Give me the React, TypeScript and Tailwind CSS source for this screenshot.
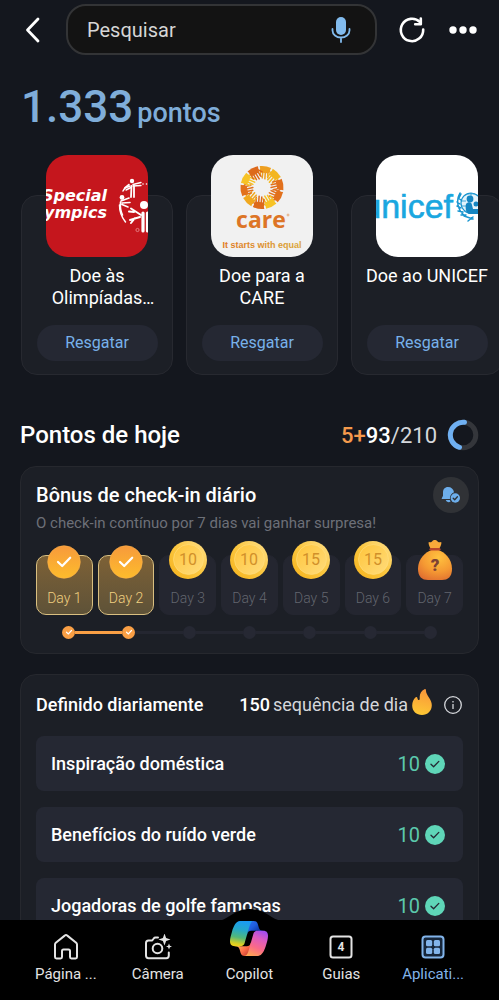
import React, { useState } from "react";
import clsx from "clsx";

interface Donation {
  id: number;
  title: string;
  logo: React.ReactNode;
}

interface CheckInDay {
  day: number;
  points: number;
  status: "done" | "pending" | "surprise";
}

const SpecialOlympicsLogo = () => (
  <svg viewBox="0 0 102 102" className="h-full w-full bg-[#c5161d]" aria-hidden="true">
    <g
      fill="#fff"
      fontFamily="DejaVu Sans, sans-serif"
      fontWeight="700"
      fontStyle="italic"
      fontSize="16"
      textAnchor="end"
    >
      <text x="61" y="46">Special</text>
      <text x="61" y="63">Olympics</text>
    </g>
    <g fill="none" stroke="#fff" strokeLinecap="round">
      <path d="M73.500 50c0 6 2 12 6 17M83 29.500c-2.500 1.500-4.500 3.500-6 6.500" strokeWidth="1.500" />
      <path d="M79 33l5-2M80 35l5-2.500M87 29.500l8-2M87 31l8-.5" strokeWidth="1.400" />
      <path d="M85.500 31l-.5 11M88 31v11" strokeWidth="1.800" />
      <path d="M75 46l8-3M76 48l8-.5M76 49.500l6 2.500M74.500 47c-.5 5 0 9 2 13" strokeWidth="1.600" />
      <path d="M95 60l-10-6.500M94 62l-10 3M88 57l-5-.5M89 63l-4 5" strokeWidth="2" />
      <path d="M97 58v18M101.500 58v18" strokeWidth="3.200" />
    </g>
    <g fill="#fff">
      <circle cx="86" cy="26" r="2.200" />
      <circle cx="76" cy="42.500" r="2.400" />
      <circle cx="98" cy="50" r="4" />
      <circle cx="97" cy="29" r="0.800" />
      <circle cx="100.500" cy="29" r="0.800" />
    </g>
    <circle cx="91.500" cy="75" r="1.600" fill="none" stroke="#f3b7b9" strokeWidth="0.600" />
  </svg>
);

const careHands = [
  "#ee9f20",
  "#f3b61f",
  "#e2711d",
  "#e2711d",
  "#f7c325",
  "#dd6a1c",
  "#f0a81e",
  "#e2711d",
  "#f7c325",
  "#dd6a1c",
];

const CareLogo = () => (
  <svg viewBox="0 0 102 102" className="h-full w-full bg-[#f1f1f1]" aria-hidden="true">
    <defs>
      <linearGradient id="careTag" x1="0" x2="1">
        <stop offset="0" stopColor="#e07a22" />
        <stop offset="1" stopColor="#d9a63a" />
      </linearGradient>
    </defs>
    {careHands.map((color, i) => (
      <g key={i} transform={`translate(51 32.500) rotate(${i * 36 + 10})`}>
        <path d="M-6-20.700A21.600 21.600 0 0 1 5.600-20.800L4-15-3.500-14.500Z" fill={color} />
        <path
          d="M-4.500-18l.5 6.500M-2-17l.5 7.500M.500-17l.8 8M3-17l1 6.500M4-18l3 4"
          stroke={color}
          strokeWidth="1.500"
          strokeLinecap="round"
          fill="none"
        />
      </g>
    ))}
    <text
      x="50"
      y="73"
      fill="#dd7526"
      fontFamily="Open Sans, sans-serif"
      fontWeight="700"
      fontSize="23"
      textAnchor="middle"
    >
      care
    </text>
    <circle cx="77" cy="60" r="1" fill="none" stroke="#dd7526" strokeWidth="0.500" />
    <text
      x="51"
      y="93"
      fill="url(#careTag)"
      fontFamily="Liberation Sans, sans-serif"
      fontWeight="700"
      fontSize="9"
      textAnchor="middle"
    >
      It starts with equal
    </text>
  </svg>
);

const UnicefLogo = () => (
  <svg viewBox="0 0 102 102" className="h-full w-full bg-white" aria-hidden="true">
    <text
      x="77"
      y="63"
      fill="#1aa7e0"
      stroke="#1aa7e0"
      strokeWidth="0.600"
      fontFamily="Liberation Sans, sans-serif"
      fontSize="34"
      textAnchor="end"
    >
      unicef
    </text>
    <circle cx="95" cy="48" r="10" fill="#e3f3fb" stroke="#1a96d0" strokeWidth="1.200" />
    <path d="M88 41c4-3 10-3 14 0M86 46h4M86 51h4M95 38v4M88 56c4 3 10 3 14 0" fill="none" stroke="#1a96d0" strokeWidth="0.800" />
    <path
      d="M84 38c-4 7-3 17 5 23M85 39l-2 4M82 43l3 2M81 47l3 2M81 51l4 2M82 56l5 1M85 60l5 0M88 61l9 3M97 62l-5 4"
      fill="none"
      stroke="#1a96d0"
      strokeWidth="1.500"
      strokeLinecap="round"
    />
    <g fill="#1586c2">
      <circle cx="94" cy="44" r="3.400" />
      <circle cx="100" cy="49" r="2.500" />
      <path d="M90 49c2-3 6-2 6 1l1 4h5v5h-9c-3-1-4-6-3-10z" />
    </g>
  </svg>
);

const CopilotIcon = () => (
  <svg viewBox="0 0 24 22" className="h-[35px] w-[38px]" aria-hidden="true">
    <defs>
      <linearGradient id="cpTop" x1="19" y1="8" x2="12" y2="0" gradientUnits="userSpaceOnUse">
        <stop offset="0.100" stopColor="#0a2f9a" />
        <stop offset="0.600" stopColor="#1f5fe0" />
        <stop offset="1" stopColor="#2a6ff0" />
      </linearGradient>
      <linearGradient id="cpBottom" x1="5" y1="15" x2="12" y2="22" gradientUnits="userSpaceOnUse">
        <stop offset="0" stopColor="#ffb657" />
        <stop offset="0.500" stopColor="#ff6f4a" />
        <stop offset="1" stopColor="#c0362c" />
      </linearGradient>
      <linearGradient id="cpLeft" x1="8" y1="0" x2="5" y2="16" gradientUnits="userSpaceOnUse">
        <stop offset="0" stopColor="#1a9bf5" />
        <stop offset="0.350" stopColor="#25a9c8" />
        <stop offset="0.650" stopColor="#52b87a" />
        <stop offset="0.900" stopColor="#d8cf25" />
        <stop offset="1" stopColor="#f0d21c" />
      </linearGradient>
      <linearGradient id="cpRight" x1="20" y1="6" x2="13" y2="22" gradientUnits="userSpaceOnUse">
        <stop offset="0" stopColor="#a24df0" />
        <stop offset="0.300" stopColor="#dc5bc0" />
        <stop offset="0.650" stopColor="#fa6a88" />
        <stop offset="1" stopColor="#ffa552" />
      </linearGradient>
    </defs>
    <path
      fill="url(#cpTop)"
      d="M17.533 1.829A2.528 2.528 0 0015.11 0h-.737a2.531 2.531 0 00-2.484 2.087l-1.263 6.937.314-1.080a2.528 2.528 0 012.424-1.833h4.284l1.797.706 1.731-.706h-.505a2.528 2.528 0 01-2.423-1.829l-.715-2.453z"
    />
    <path
      fill="url(#cpBottom)"
      d="M6.726 20.160A2.528 2.528 0 009.152 22h1.566c1.370 0 2.490-1.100 2.525-2.480l.170-6.690-.357 1.228a2.528 2.528 0 01-2.423 1.830h-4.320l-1.540-.842-1.667.843h.497c1.124 0 2.113.750 2.426 1.840l.697 2.432z"
    />
    <path
      fill="url(#cpLeft)"
      d="M15 0H6.252c-2.500 0-4 3.331-5 6.662-1.184 3.947-2.734 9.225 1.750 9.225H6.780c1.130 0 2.120-.753 2.430-1.847.657-2.317 1.809-6.359 2.713-9.436.460-1.563.842-2.906 1.430-3.742A1.970 1.970 0 0115 0"
    />
    <path
      fill="url(#cpRight)"
      d="M9 22h8.749c2.500 0 4-3.332 5-6.663 1.184-3.948 2.734-9.227-1.750-9.227H17.220c-1.129 0-2.120.754-2.430 1.848a1149.200 1149.200 0 01-2.713 9.437c-.460 1.564-.842 2.907-1.430 3.743A1.970 1.970 0 019 22"
    />
  </svg>
);

const HomeIcon = () => (
  <svg viewBox="0 0 26 26" className="h-[26px] w-[26px]" fill="none" stroke="currentColor" strokeWidth="2" strokeLinejoin="round" aria-hidden="true">
    <path d="M2 10.600c0-.700.300-1.300.800-1.800L11.700 1.600c.700-.600 1.900-.600 2.600 0l8.900 7.200c.500.500.800 1.100.800 1.800V23c0 .800-.600 1.400-1.400 1.400h-4.200c-.800 0-1.400-.600-1.400-1.400v-6c0-.800-.700-1.500-1.500-1.500h-5c-.800 0-1.500.700-1.500 1.500v6c0 .800-.600 1.400-1.400 1.400H3.400C2.600 24.400 2 23.800 2 23z" />
  </svg>
);

const CameraIcon = () => (
  <svg viewBox="0 0 28 26" className="h-[26px] w-7" fill="none" stroke="currentColor" strokeWidth="2" strokeLinecap="round" strokeLinejoin="round" aria-hidden="true">
    <path d="M14 3.500h-2.500c-.700 0-1.400.400-1.800 1L8.200 6.500H4.500C3.100 6.500 2 7.600 2 9v12.500C2 23 3.100 24.200 4.500 24.200h17.800c1.400 0 2.500-1.200 2.500-2.700V18.500" />
    <circle cx="13.500" cy="14.500" r="4.800" />
    <path d="M20.500-.5l1.600 4.400 4.400 1.600-4.400 1.600-1.600 4.400-1.600-4.400-4.400-1.600 4.400-1.600zM25 9.500l.9 2.300 2.100.7-2.100.7-.9 2.300-.9-2.300-2.100-.7 2.100-.7z" fill="currentColor" stroke="none" />
  </svg>
);

const TabsIcon = () => (
  <svg viewBox="0 0 26 26" className="h-[26px] w-[26px]" aria-hidden="true">
    <rect x="2.500" y="2.500" width="21" height="21" rx="2.500" fill="none" stroke="currentColor" strokeWidth="2" />
    <text x="13" y="17" fill="currentColor" fontFamily="Roboto, sans-serif" fontWeight="700" fontSize="12" textAnchor="middle">
      4
    </text>
  </svg>
);

const AppsIcon = () => (
  <svg viewBox="0 0 26 26" className="h-[26px] w-[26px]" fill="currentColor" aria-hidden="true">
    <rect x="2.500" y="2.500" width="21" height="21" rx="3" fill="#16263a" stroke="currentColor" strokeWidth="2" />
    <rect x="6" y="6" width="6.200" height="6.200" rx="1.500" />
    <rect x="13.800" y="6" width="6.200" height="6.200" rx="1.500" />
    <rect x="6" y="13.800" width="6.200" height="6.200" rx="1.500" />
    <rect x="13.800" y="13.800" width="6.200" height="6.200" rx="1.500" />
  </svg>
);

const Coin = ({ points }: { points: number }) => (
  <svg viewBox="0 0 38 38" className="h-[38px] w-[38px]" aria-label={`${points} pontos`}>
    <defs>
      <linearGradient id="coinRim" x1="0" y1="1" x2="1" y2="0">
        <stop offset="0" stopColor="#f5b21c" />
        <stop offset="0.500" stopColor="#fbc63e" />
        <stop offset="1" stopColor="#ffe08a" />
      </linearGradient>
      <linearGradient id="coinFace" x1="0" y1="0" x2="1" y2="1">
        <stop offset="0" stopColor="#ffc53a" />
        <stop offset="1" stopColor="#ffdc7c" />
      </linearGradient>
    </defs>
    <circle cx="19" cy="19" r="19" fill="url(#coinRim)" />
    <circle cx="19.500" cy="18.500" r="15" fill="url(#coinFace)" stroke="#ffdf82" strokeWidth="0.600" />
    <text x="19" y="24" fill="#d1902a" fontFamily="Roboto, sans-serif" fontSize="16" fontWeight="400" textAnchor="middle">
      {points}
    </text>
  </svg>
);

const CheckBadge = () => (
  <svg viewBox="0 0 34 34" className="h-[34px] w-[34px]" aria-hidden="true">
    <defs>
      <linearGradient id="badge" x1="0" y1="0" x2="0" y2="1">
        <stop offset="0" stopColor="#f79a3c" />
        <stop offset="1" stopColor="#fdbc2c" />
      </linearGradient>
    </defs>
    <circle cx="17" cy="17" r="16.300" fill="url(#badge)" stroke="#fcb04a" strokeWidth="0.600" />
    <path d="M11 17l4.200 4L23.200 12.700" fill="none" stroke="#fff" strokeWidth="2.200" strokeLinecap="round" strokeLinejoin="round" />
  </svg>
);

const MoneyBag = () => (
  <svg viewBox="0 0 36 42" className="h-[42px] w-9" aria-hidden="true">
    <defs>
      <radialGradient id="bag" cx="0.600" cy="0.250" r="0.850">
        <stop offset="0" stopColor="#ffc23f" />
        <stop offset="0.550" stopColor="#f59a33" />
        <stop offset="1" stopColor="#df6c30" />
      </radialGradient>
    </defs>
    <path d="M12 3c1.500.800 2.500.200 3.500-1 .8-1.300 3.700-1.300 4.600 0 1 1.200 2.200 1.800 3.900 1 1 0 0 5-2.500 7.500h-7C12 8 11 3 12 3z" fill="#f8a93a" />
    <path d="M14.500 11C9 13 1 19.500 1 29.500 1 38 5 41 11 41h14c6 0 10-3 10-11.500C35 19.500 27 13 21.500 11z" fill="url(#bag)" />
    <rect x="12.500" y="9" width="11" height="2.600" rx="1.300" fill="#b8452c" />
    <text x="18" y="32" fill="#7d4134" fontFamily="Roboto, sans-serif" fontSize="17" fontWeight="900" textAnchor="middle">
      ?
    </text>
  </svg>
);

const BellCheckIcon = () => (
  <svg viewBox="0 0 20 18" className="h-[18px] w-5" aria-hidden="true">
    <path d="M7 1C3.800 1 2 3.300 2 6.200v3.600L.8 12.200c-.200.500 0 .9.500.9H9c-.3-3.300 1.600-6 4-6.900C12.500 3 10.200 1 7 1z" fill="#6daeeb" />
    <path d="M4.800 14h4l.8 1.500c-1.600 1.300-4.200.7-4.800-1.500z" fill="#6daeeb" />
    <circle cx="14.300" cy="12" r="4.700" fill="#6daeeb" />
    <path d="M12.200 12.200l1.500 1.500 2.700-3" fill="none" stroke="#2d3035" strokeWidth="1.300" strokeLinecap="round" strokeLinejoin="round" />
  </svg>
);

const FlameIcon = () => (
  <svg viewBox="0 0 20 26" className="h-[26px] w-5" aria-hidden="true">
    <defs>
      <linearGradient id="flame" x1="0.600" y1="0" x2="0.400" y2="1">
        <stop offset="0" stopColor="#f9963a" />
        <stop offset="1" stopColor="#fdc834" />
      </linearGradient>
    </defs>
    <path
      d="M12.500.2c.9-.4 1.400.1 1.400.9.100 3.200 1.400 5 3.500 8.200 1.500 2.300 2.400 4.500 2.400 7C19.800 22 15.500 26 10 26S.2 22.200.2 16.500C.2 13 1.600 10.200 3.700 8.300c.7-.6 1.400-.3 1.600.5.300 1.500.8 2.300 1.500 2.300 1 0 1-1.400.9-3C7.600 4.500 9.500 1.500 12.500.2z"
      fill="url(#flame)"
    />
  </svg>
);

const donations: Donation[] = [
  { id: 1, title: "Doe às Olimpíadas Especiais", logo: <SpecialOlympicsLogo /> },
  { id: 2, title: "Doe para a CARE", logo: <CareLogo /> },
  { id: 3, title: "Doe ao UNICEF", logo: <UnicefLogo /> },
];

const checkInDays: CheckInDay[] = [
  { day: 1, points: 5, status: "done" },
  { day: 2, points: 5, status: "done" },
  { day: 3, points: 10, status: "pending" },
  { day: 4, points: 10, status: "pending" },
  { day: 5, points: 15, status: "pending" },
  { day: 6, points: 15, status: "pending" },
  { day: 7, points: 0, status: "surprise" },
];

const dailySet = [
  { id: 1, title: "Inspiração doméstica", points: 10 },
  { id: 2, title: "Benefícios do ruído verde", points: 10 },
  { id: 3, title: "Jogadoras de golfe famosas", points: 10 },
];

const navItems = [
  { id: "home", label: "Página ...", icon: <HomeIcon /> },
  { id: "camera", label: "Câmera", icon: <CameraIcon /> },
  { id: "copilot", label: "Copilot", icon: <CopilotIcon /> },
  { id: "tabs", label: "Guias", icon: <TabsIcon /> },
  { id: "apps", label: "Aplicati...", icon: <AppsIcon /> },
];

const Header = () => {
  const [query, setQuery] = useState("");

  return (
    <header className="flex shrink-0 items-center px-5 pt-1">
      <button type="button" aria-label="Voltar" className="flex h-10 w-[46px] items-center pl-1">
        <svg viewBox="0 0 18 26" className="h-[26px] w-[18px]" fill="none" stroke="#fff" strokeWidth="2.800" strokeLinecap="round" strokeLinejoin="round" aria-hidden="true">
          <path d="M14 2L3.500 13 14 24" />
        </svg>
      </button>

      <div className="flex h-[51px] min-w-0 flex-1 items-center rounded-[20px] border-2 border-[#333436] bg-[#131313] pr-6 pl-[19px]">
        <input
          type="text"
          aria-label="Pesquisar"
          placeholder="Pesquisar"
          value={query}
          onChange={(e) => setQuery(e.target.value)}
          className="min-w-0 flex-1 bg-transparent text-xl text-[#d6d6d6] outline-none placeholder:text-[#d6d6d6]"
        />
        <button type="button" aria-label="Pesquisa por voz">
          <svg viewBox="0 0 20 26" className="h-[26px] w-5" aria-hidden="true">
            <rect x="5" y="0" width="10" height="18" rx="5" fill="#82bbed" />
            <path d="M1.500 12v1.500a8.500 7 0 0 0 17 0V12M10 20.500V25" fill="none" stroke="#82bbed" strokeWidth="1.800" strokeLinecap="round" />
          </svg>
        </button>
      </div>

      <button type="button" aria-label="Atualizar" className="ml-[21px] flex h-10 w-7 items-center justify-center">
        <svg viewBox="0 0 28 28" className="h-7 w-7" fill="none" stroke="#fff" strokeWidth="2.600" strokeLinecap="round" strokeLinejoin="round" aria-hidden="true">
          <path d="M25.200 13.500A11.200 11.200 0 1 1 22 6.100" />
          <path d="M22.800 2.500v5.700h-5.600" />
        </svg>
      </button>
      <button type="button" aria-label="Mais opções" className="ml-[21px] flex h-10 w-8 items-center justify-center">
        <svg viewBox="0 0 28 8" className="h-2 w-7" fill="#fff" aria-hidden="true">
          <circle cx="4" cy="4" r="3.700" />
          <circle cx="14" cy="4" r="3.700" />
          <circle cx="24" cy="4" r="3.700" />
        </svg>
      </button>
    </header>
  );
};

const DonationCard = ({ title, logo }: Donation) => (
  <article className="flex h-[180px] w-[152px] shrink-0 flex-col items-center rounded-2xl border border-[#272930] bg-[#1c1f26] px-[11px]">
    <div className="-mt-[41px] h-[102px] w-[102px] shrink-0 overflow-hidden rounded-[22px]">{logo}</div>
    <h3 className="mt-2 line-clamp-2 h-11 w-full text-center text-lg leading-[22px] text-white">{title}</h3>
    <button
      type="button"
      className="mt-4 h-9 w-[121px] rounded-full bg-[#252833] text-base text-[#78b1ea]"
    >
      Resgatar
    </button>
  </article>
);

const DayTile = ({ day, points, status }: CheckInDay) => (
  <li
    className={clsx(
      "flex h-[60px] flex-col items-center rounded-[10px] border",
      status === "done"
        ? "border-[#d9bf80] bg-linear-to-b from-[#7d6136] to-[#5e5238] text-[#f0d080]"
        : "border-[#242630] bg-[#242630] text-[#62656e]"
    )}
  >
    <div className="-mt-[18px] flex h-11 shrink-0 items-center justify-center">
      {status === "done" && (
        <div className="pt-1">
          <CheckBadge />
        </div>
      )}
      {status === "pending" && <Coin points={points} />}
      {status === "surprise" && <MoneyBag />}
    </div>
    <span className="mt-[6px] text-sm leading-5 font-light">Day {day}</span>
  </li>
);

const Timeline = () => (
  <div className="mx-[26px] mt-[11px] flex h-3 items-center" aria-hidden="true">
    {checkInDays.map(({ day, status }, i) => (
      <React.Fragment key={day}>
        {i > 0 && (
          <span className={clsx("h-[3px] flex-1", status === "done" ? "bg-[#f99f45]" : "bg-[#242630]")} />
        )}
        <span
          className={clsx(
            "flex h-[13px] w-[13px] shrink-0 items-center justify-center rounded-full",
            status === "done" ? "bg-[#f99f45]" : "bg-[#262833]"
          )}
        >
          {status === "done" && (
            <svg viewBox="0 0 8 8" className="h-2 w-2" fill="none" stroke="#fff" strokeWidth="1.200" strokeLinecap="round">
              <path d="M1.500 4.200l1.800 1.700 3.200-3.400" />
            </svg>
          )}
        </span>
      </React.Fragment>
    ))}
  </div>
);

const BottomNav = () => {
  const [active, setActive] = useState("apps");

  return (
    <nav className="relative h-20 shrink-0 bg-black">
      {/* Raised notch behind the Copilot button */}
      <svg viewBox="0 0 64 12" className="absolute -top-[11px] left-1/2 h-3 w-16 -translate-x-1/2" fill="#000" aria-hidden="true">
        <path d="M0 12C12 10 16 0 32 0s20 10 32 12z" />
      </svg>
      <div className="relative grid h-full grid-cols-5 px-5">
        {navItems.map((item) => (
          <button
            key={item.id}
            type="button"
            onClick={() => setActive(item.id)}
            className={clsx(
              "flex flex-col items-center",
              item.id === "copilot" ? "pt-0" : "pt-[14px]",
              active === item.id ? "text-[#82b4ea]" : "text-[#e4e4e4]"
            )}
          >
            <span className={clsx("flex items-center", item.id === "copilot" ? "h-10 pb-1" : "h-[26px]")}>
              {item.icon}
            </span>
            <span className="mt-1 text-[15px] leading-5">{item.label}</span>
          </button>
        ))}
      </div>
    </nav>
  );
};

const App: React.FC = () => {
  return (
    <div className="flex h-screen flex-col overflow-hidden bg-[#14171e] font-['Roboto',sans-serif] text-white">
      <Header />

      <main className="min-h-0 flex-1 overflow-y-auto [scrollbar-width:none]">
        <p className="mt-6 flex items-baseline gap-1 px-[21px] font-medium text-[#7fadd9]">
          <span className="text-[44px] leading-[56px]">1.333</span>
          <span className="text-[27px]">pontos</span>
        </p>

        {/* Donations */}
        <section className="flex gap-[13px] overflow-x-auto px-[21px] pt-[60px] [scrollbar-width:none]">
          {donations.map((donation) => (
            <DonationCard key={donation.id} {...donation} />
          ))}
        </section>

        {/* Points of the day */}
        <div className="mt-11 flex h-8 items-center justify-between px-5">
          <h2 className="text-2xl font-medium">Pontos de hoje</h2>
          <div className="flex items-center gap-[10px]">
            <p className="text-[22px] text-[#d5d7db]">
              <span className="font-medium text-[#f59a4c]">5+</span>
              <span className="font-medium text-white">93</span>/210
            </p>
            <svg viewBox="0 0 32 32" className="h-8 w-8" fill="none" strokeWidth="5" aria-hidden="true">
              <circle cx="16" cy="16" r="12.800" stroke="#34363b" />
              <path d="M17.500 3.300A12.800 12.800 0 0 0 12.500 28.300" stroke="#6fb0f2" strokeLinecap="round" />
            </svg>
          </div>
        </div>

        {/* Daily check-in */}
        <section className="mx-5 mt-[15px] rounded-2xl border border-[#26282e] bg-[#1c1f26] px-[15px] pt-[10px] pb-[15px]">
          <div className="flex items-start justify-between">
            <div>
              <h3 className="pt-[6px] text-xl leading-6 font-medium">Bônus de check-in diário</h3>
              <p className="mt-1 text-[15px] leading-6 text-[#6d7078]">
                O check-in contínuo por 7 dias vai ganhar surpresa!
              </p>
            </div>
            <button
              type="button"
              aria-label="Lembrete de check-in"
              className="-mr-[6px] flex h-9 w-9 shrink-0 items-center justify-center rounded-full bg-[#303236]"
            >
              <BellCheckIcon />
            </button>
          </div>
          <ul className="mt-5 grid grid-cols-7 gap-[5px]">
            {checkInDays.map((item) => (
              <DayTile key={item.day} {...item} />
            ))}
          </ul>
          <Timeline />
        </section>

        {/* Daily set */}
        <section className="mx-5 mt-5 rounded-2xl border border-[#26282e] bg-[#1c1f26] px-[15px] pt-[14px] pb-4">
          <div className="flex h-8 items-center justify-between">
            <h3 className="text-lg font-medium">Definido diariamente</h3>
            <div className="flex items-center">
              <p className="flex items-baseline gap-[3px] text-lg text-[#d5d7db]">
                <span className="font-medium text-white">150</span>
                <span>sequência de dia</span>
              </p>
              <span className="ml-1 pb-[6px]">
                <FlameIcon />
              </span>
              <button type="button" aria-label="Mais informações" className="ml-[11px]">
                <svg viewBox="0 0 20 20" className="h-5 w-5" fill="none" stroke="#d5d7db" strokeWidth="1.300" aria-hidden="true">
                  <circle cx="10" cy="10" r="8.300" />
                  <path d="M10 9v5M10 6v1.400" />
                </svg>
              </button>
            </div>
          </div>

          <ul className="mt-[15px] flex flex-col gap-4">
            {dailySet.map((task) => (
              <li key={task.id}>
                <a
                  href="#"
                  className="flex h-[55px] items-center justify-between rounded-lg bg-[#252833] pr-[18px] pl-[15px] text-lg font-medium"
                >
                  <span>{task.title}</span>
                  <span className="flex items-center gap-[5px] text-xl font-normal text-[#5bc9ac]">
                    {task.points}
                    <svg viewBox="0 0 20 20" className="h-5 w-5" aria-hidden="true">
                      <circle cx="10" cy="10" r="10" fill="#5fd6b8" />
                      <path d="M6 10.300l2.600 2.500 5.200-5.400" fill="none" stroke="#252833" strokeWidth="1.300" strokeLinecap="round" strokeLinejoin="round" />
                    </svg>
                  </span>
                </a>
              </li>
            ))}
          </ul>
        </section>
      </main>

      <BottomNav />
    </div>
  );
};

export default App;
